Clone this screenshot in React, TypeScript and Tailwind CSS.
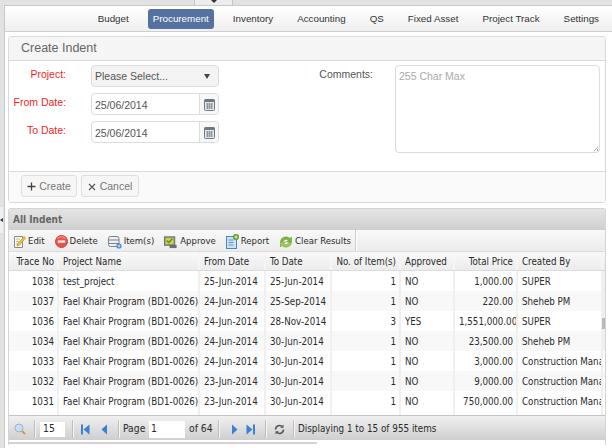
const NAV = ['Budget', 'Procurement', 'Inventory', 'Accounting', 'QS', 'Fixed Asset', 'Project Track', 'Settings'];

const COLS = [
  { title: 'Trace No', w: 'w-[50px]', align: 'text-right' },
  { title: 'Project Name', w: 'w-[141px]', align: 'text-left' },
  { title: 'From Date', w: 'w-[66px]', align: 'text-left' },
  { title: 'To Date', w: 'w-[66px]', align: 'text-left' },
  { title: 'No. of Item(s)', w: 'w-[69px]', align: 'text-right' },
  { title: 'Approved', w: 'w-[54px]', align: 'text-left' },
  { title: 'Total Price', w: 'w-[63px]', align: 'text-right' },
  { title: 'Created By', w: 'w-[85px]', align: 'text-left' },
];

const FAEL = 'Fael Khair Program (BD1-0026)';
const ROWS = [
  ['1038', 'test_project', '25-Jun-2014', '25-Jun-2014', '1', 'NO', '1,000.00', 'SUPER'],
  ['1037', FAEL, '24-Jun-2014', '25-Sep-2014', '1', 'NO', '220.00', 'Sheheb PM'],
  ['1036', FAEL, '24-Jun-2014', '28-Nov-2014', '3', 'YES', '1,551,000.00', 'SUPER'],
  ['1034', FAEL, '24-Jun-2014', '30-Jun-2014', '1', 'NO', '23,500.00', 'Sheheb PM'],
  ['1033', FAEL, '24-Jun-2014', '30-Jun-2014', '1', 'NO', '3,000.00', 'Construction Manager'],
  ['1032', FAEL, '23-Jun-2014', '30-Jun-2014', '1', 'NO', '9,000.00', 'Construction Manager'],
  ['1031', FAEL, '23-Jun-2014', '30-Jun-2014', '1', 'NO', '750,000.00', 'Construction Manager'],
];

const GRID_FONT = "font-['DejaVu_Sans_Condensed','DejaVu_Sans',sans-serif] text-[9.7px] text-[#2a2a2a]";

function CalendarIcon() {
  return (
    <svg width="13" height="13" viewBox="0 0 13 13">
      <rect x="1.5" y="1.5" width="10" height="11" rx="1" fill="#e6e9ec" stroke="#6d7882" />
      <rect x="1.5" y="1.5" width="10" height="2.5" fill="#6d7882" />
      <path d="M3 6h7M3 8h7M3 10h7M4.5 5v6M6.5 5v6M8.5 5v6" stroke="#87919a" strokeWidth="0.9" />
    </svg>
  );
}

function DateField({ value }: { value: string }) {
  return (
    <div className="flex h-[22px] w-[128px] rounded-[4px] border border-[#dcdcdc] bg-white">
      <div className="flex-1 pl-[3px] leading-[22px] text-[#555]">{value}</div>
      <div className="flex w-[19px] items-center justify-center rounded-r-[4px] border-l border-[#dcdcdc] bg-[#f7f7f7]">
        <CalendarIcon />
      </div>
    </div>
  );
}

function Label({ children, width = 'w-[57px]', red = true }: { children: string; width?: string; red?: boolean }) {
  return (
    <div className={`${width} mt-[1px] text-right leading-[16px] ${red ? 'text-[#f01f1f]' : 'text-[#555]'}`}>
      {children}
    </div>
  );
}

function ToolIcon({ name }: { name: string }) {
  if (name === 'Edit') {
    return (
      <svg width="13" height="15" viewBox="0 0 13 15">
        <path d="M1.5 2.5h8v11h-8z" fill="#f8f8f4" stroke="#8a8a80" />
        <path d="M3 5h4M3 7.5h3M3 10h3" stroke="#b8b8ae" />
        <path d="M11 2.5l1.5 1.5-6 7-2.5 1 1-2.5z" fill="#f3c33a" stroke="#b98d17" strokeWidth="0.7" />
      </svg>
    );
  }
  if (name === 'Delete') {
    return (
      <svg width="13" height="13" viewBox="0 0 13 13">
        <circle cx="6.5" cy="6.5" r="6" fill="#e9564e" stroke="#c9423c" />
        <path d="M2.5 3.5c2-2.2 6-2.2 8 0" stroke="#f6a6a0" fill="none" />
        <rect x="2.8" y="5.4" width="7.4" height="2.3" fill="#fbeeee" />
      </svg>
    );
  }
  if (name === 'Item(s)') {
    return (
      <svg width="14" height="14" viewBox="0 0 14 14">
        <rect x="0.5" y="1.5" width="10.5" height="10" rx="2" fill="#eceff3" stroke="#77808c" />
        <path d="M0.5 5h10.5M0.5 8.5h10.5" stroke="#77808c" />
        <circle cx="11" cy="11" r="2.6" fill="#3a84d8" />
        <path d="M9.6 11h2.8M11 9.6v2.8" stroke="#fff" strokeWidth="0.8" />
      </svg>
    );
  }
  if (name === 'Approve') {
    return (
      <svg width="14" height="14" viewBox="0 0 15 15">
        <rect x="0.5" y="2" width="11" height="9" fill="#9aa08e" stroke="#666c5c" />
        <rect x="2" y="3.5" width="8" height="6" fill="#e3cf3e" />
        <path d="M3 6l2 2 4-4" stroke="#3f9b2e" strokeWidth="1.6" fill="none" />
        <rect x="6" y="10.5" width="7.5" height="3.5" fill="#6e6e6e" />
      </svg>
    );
  }
  if (name === 'Report') {
    return (
      <svg width="13" height="15" viewBox="0 0 13 15">
        <rect x="0.5" y="2.5" width="10" height="12" fill="#cfe2f3" stroke="#4d86b8" />
        <path d="M2.5 6h5M2.5 8.5h5M2.5 11h5" stroke="#5f94c2" />
        <circle cx="10" cy="3" r="2.8" fill="#7fb83a" stroke="#5d8f26" strokeWidth="0.7" />
        <circle cx="10" cy="3" r="1" fill="#e7f4d3" />
      </svg>
    );
  }
  return (
    <svg width="14" height="14" viewBox="0 0 14 14">
      <path d="M1.5 6.5a5.5 5 0 0 1 9.5-3l1.5-1.5v5h-5l1.8-1.8a3.2 3 0 0 0-5.3 1.3z" fill="#7cb83c" stroke="#5a8f27" strokeWidth="0.5" />
      <path d="M12.5 7.5a5.5 5 0 0 1-9.5 3l-1.5 1.5v-5h5l-1.8 1.8a3.2 3 0 0 0 5.3-1.3z" fill="#a3cf55" stroke="#5a8f27" strokeWidth="0.5" />
    </svg>
  );
}

function PagerSep() {
  return <div className="h-[18px] w-[2px] border-l border-r border-l-[#bdbdbd] border-r-[#f6f6f6]" />;
}

function Arrow({ dir, bar }: { dir: 'left' | 'right'; bar?: boolean }) {
  return (
    <svg width="9" height="11" viewBox="0 0 9 11">
      {dir === 'left' ? (
        <>
          {bar && <rect x="0" y="0.5" width="2" height="10" fill="#3f7fd0" />}
          <path d={bar ? 'M8.5 0.5v10L2.5 5.5z' : 'M7 0.5v10L1.5 5.5z'} fill="#3f7fd0" />
        </>
      ) : (
        <>
          {bar && <rect x="7" y="0.5" width="2" height="10" fill="#3f7fd0" />}
          <path d={bar ? 'M0.5 0.5v10L6.5 5.5z' : 'M2 0.5v10L7.5 5.5z'} fill="#3f7fd0" />
        </>
      )}
    </svg>
  );
}

export default function App() {
  return (
    <div className="relative h-[448px] w-[612px] overflow-hidden bg-[#e2e2e2] pl-[4px] pt-[5px] font-['Liberation_Sans',sans-serif]">
      {/* collapse handle at the top */}
      <div className="absolute left-[194px] top-0 flex h-[5px] w-[39px] justify-center border-x border-[#c4c4c4] bg-[#ededed]">
        <div className="h-0 w-0 border-x-[3px] border-t-[3px] border-x-transparent border-t-[#333]" />
      </div>
      {/* side handle */}
      <div className="absolute left-0 top-[207px] flex h-[26px] w-[3px] items-center bg-[#f0f0f0]">
        <div className="h-0 w-0 border-y-[2px] border-r-[3px] border-y-transparent border-r-[#333]" />
      </div>

      <div className="h-[443px] border-l border-t border-[#c8c8c8] bg-white">
        {/* top nav */}
        <div className="flex h-[26px] items-center justify-end gap-[14px] border-b border-[#cfcfcf] bg-gradient-to-b from-white to-[#efefef] pr-[8px] text-[9.8px]">
          {NAV.map((n) => (
            <div
              key={n}
              className={
                n === 'Procurement'
                  ? 'flex h-[20px] items-center rounded-[3px] bg-[#55719f] px-[5px] pt-[1px] text-white'
                  : 'flex h-[20px] items-center px-[5px] pt-[1px] text-[#333]'
              }
            >
              {n}
            </div>
          ))}
        </div>

        <div className="pl-[3px] pr-[6px] pt-[4px]">
          {/* create form card */}
          <div className="h-[167px] rounded-[3px] border border-[#d9d9d9]">
            <div className="flex h-[24px] items-center border-b border-[#d9d9d9] bg-[#f5f5f5] pl-[12px] text-[12.5px] text-[#666]">
              Create Indent
            </div>
            <div className="flex h-[110px] pt-[4px] text-[10.5px]">
              <div className="flex flex-col gap-[6px]">
                <div className="flex items-start gap-[25px]">
                  <Label>Project:</Label>
                  <div className="flex h-[22px] w-[128px] items-center justify-between rounded-[4px] border border-[#dcdcdc] bg-[#f4f4f4] pl-[3px] pr-[8px] pt-[1px] text-[#555]">
                    <span>Please Select...</span>
                    <div className="h-0 w-0 border-x-[3px] border-t-[5px] border-x-transparent border-t-[#445]" />
                  </div>
                </div>
                <div className="flex items-start gap-[25px]">
                  <Label>From Date:</Label>
                  <DateField value="25/06/2014" />
                </div>
                <div className="flex items-start gap-[25px]">
                  <Label>To Date:</Label>
                  <DateField value="25/06/2014" />
                </div>
              </div>
              <div className="ml-[100px] flex items-start gap-[22px]">
                <Label width="w-[54px]" red={false}>Comments:</Label>
                <div className="relative h-[88px] w-[205px] rounded-[4px] border border-[#dcdcdc] bg-white px-[3px] py-[3px] text-[#aaa]">
                  255 Char Max
                  <div className="absolute bottom-[1px] right-[1px] h-[5px] w-[5px] bg-[linear-gradient(135deg,transparent_55%,#aaa_55%,#aaa_65%,transparent_65%,transparent_80%,#aaa_80%)]" />
                </div>
              </div>
            </div>
            <div className="flex h-[31px] items-start gap-[4px] border-t border-[#d9d9d9] bg-[#fafafa] pl-[12px] pt-[3px] text-[10.5px] text-[#777]">
              <div className="flex h-[22px] w-[56px] items-center justify-center gap-[3px] rounded-[3px] border border-[#dedede] bg-[#f6f6f6] pt-[1px]">
                <svg width="9" height="9" viewBox="0 0 9 9"><path d="M4.5 0.5v8M0.5 4.5h8" stroke="#444" strokeWidth="1.3" /></svg>
                Create
              </div>
              <div className="flex h-[22px] w-[58px] items-center justify-center gap-[4px] rounded-[3px] border border-[#dedede] bg-[#f6f6f6] pt-[1px]">
                <svg width="8" height="8" viewBox="0 0 8 8"><path d="M1 1l6 6M7 1l-6 6" stroke="#555" strokeWidth="1.1" /></svg>
                Cancel
              </div>
            </div>
          </div>

          {/* grid panel */}
          <div className={`relative mt-[5px] h-[237px] overflow-hidden rounded-t-[3px] border-x border-t border-[#d4d4d4] ${GRID_FONT}`}>
            <div className="flex h-[21px] items-center bg-gradient-to-b from-[#e4e4e4] to-[#cfcfcf] pl-[4px] text-[10px] font-bold text-[#666]">
              All Indent
            </div>
            <div className="flex h-[22px] items-start border-b border-[#ddd] bg-gradient-to-b from-[#f8f8f8] to-[#ececec] text-[9.5px]">
              <div className="flex h-[21px] items-center gap-[10px] border-r border-[#ccc] pl-[4px] pr-[4px] pt-[2px] shadow-[1px_0_0_#fff]">
                {['Edit', 'Delete', 'Item(s)', 'Approve', 'Report', 'Clear Results'].map((t) => (
                  <div key={t} className="flex items-center gap-[2px]">
                    <ToolIcon name={t} />
                    <span>{t}</span>
                  </div>
                ))}
              </div>
            </div>

            <div className="flex h-[19px] border-b border-[#dcdcdc] bg-gradient-to-b from-[#f9f9f9] to-[#ececec]">
              {COLS.map((c) => (
                <div key={c.title} className={`${c.w} ${c.align} shrink-0 truncate border-r-2 border-[#f5f5f5] pl-[4px] pr-[3px] leading-[20px]`}>
                  {c.title}
                </div>
              ))}
            </div>

            <div className="h-[144px] bg-white">
              {ROWS.map((r, i) => (
                <div key={r[0]} className={`flex h-[20px] ${i % 2 === 1 ? 'bg-[#f8f8f8]' : 'bg-white'}`}>
                  {r.map((v, j) => (
                    <div
                      key={j}
                      className={`${COLS[j].w} ${COLS[j].align} shrink-0 overflow-hidden whitespace-nowrap border-r-2 border-[#f0f0f0] pl-[4px] pr-[3px] leading-[22px]`}
                    >
                      {v}
                    </div>
                  ))}
                </div>
              ))}
              <div className="flex h-[4px]">
                {COLS.map((c) => (
                  <div key={c.title} className={`${c.w} shrink-0 border-r-2 border-[#f0f0f0]`} />
                ))}
              </div>
            </div>

            {/* vertical scroll thumb */}
            <div className="absolute right-0 top-[62px] h-[80px] w-[3px] bg-[#efefef]">
              <div className="mt-[47px] h-[11px] w-[3px] bg-[#b9b9b9]" />
            </div>

            {/* pager */}
            <div className="flex h-[25px] items-center border-t border-[#c4c4c4] bg-gradient-to-b from-[#f0f0f0] to-[#cfcfcf] pl-[5px] pt-[2px] text-[10.3px]">
              <svg width="12" height="12" viewBox="0 0 12 12">
                <circle cx="5" cy="5" r="4" fill="#c8dcf2" stroke="#9bb6d4" />
                <path d="M8 8l3 3" stroke="#c99a4a" strokeWidth="1.8" />
              </svg>
              <div className="ml-[8px]"><PagerSep /></div>
              <div className="ml-[4px] flex h-[15px] w-[25px] items-center bg-white pl-[3px]">15</div>
              <div className="ml-[7px]"><PagerSep /></div>
              <div className="ml-[7px]"><Arrow dir="left" bar /></div>
              <div className="ml-[10px]"><Arrow dir="left" /></div>
              <div className="ml-[9px]"><PagerSep /></div>
              <span className="ml-[3px] w-[22px]">Page</span>
              <div className="ml-[4px] flex h-[17px] w-[36px] items-center bg-white pl-[2px]">1</div>
              <span className="ml-[4px] w-[23px] whitespace-nowrap">of 64</span>
              <div className="ml-[6px]"><PagerSep /></div>
              <div className="ml-[10px]"><Arrow dir="right" /></div>
              <div className="ml-[7px]"><Arrow dir="right" bar /></div>
              <div className="ml-[10px]"><PagerSep /></div>
              <svg className="ml-[7px]" width="11" height="11" viewBox="0 0 11 11">
                <path d="M1.5 5.5a4 4 0 0 1 7-2.6M9.5 5.5a4 4 0 0 1-7 2.6" fill="none" stroke="#555" strokeWidth="1.5" />
                <path d="M9.5 0.5v3.2H6.3zM1.5 10.5V7.3h3.2z" fill="#555" />
              </svg>
              <div className="ml-[8px]"><PagerSep /></div>
              <span className="ml-[3px] whitespace-nowrap text-[9.8px]">Displaying 1 to 15 of 955 items</span>
            </div>

            {/* horizontal scroll strip */}
            <div className="flex h-[5px] items-center bg-white">
              <div className="h-[2px] w-[308px] bg-[#d2d2d2]" />
            </div>
          </div>
        </div>
      </div>
    </div>
  );
}
